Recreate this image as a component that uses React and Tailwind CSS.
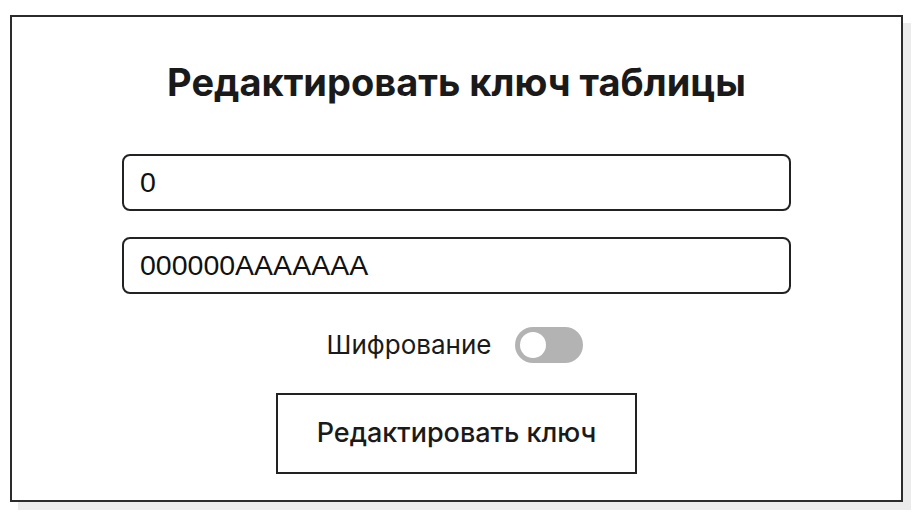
import { useState } from 'react';

export default function App() {
  const [encrypted, setEncrypted] = useState(false);

  return (
    <div className="min-h-screen bg-white pt-[15px] pl-[10px]" style={{ fontFamily: 'Inter, "Noto Sans", sans-serif' }}>
      {/* Карточка редактирования */}
      <div className="w-[893px] h-[487px] border-2 border-[#2b2b2b] bg-white shadow-[8px_8px_0_#ebebeb] flex flex-col items-center pt-[42px]">
        <h1 className="text-[38px] leading-[46px] font-bold text-[#1a1a1a]">Редактировать ключ таблицы</h1>

        <input
          type="text"
          defaultValue="0"
          className="mt-[49px] w-[669px] h-[57px] border-2 border-[#222] rounded-[8px] px-[16px] text-[28.5px] text-[#111] outline-none"
          style={{ fontFamily: '"Liberation Sans", Arial, sans-serif' }}
        />
        <input
          type="text"
          defaultValue="000000AAAAAAA"
          className="mt-[26px] w-[669px] h-[57px] border-2 border-[#222] rounded-[8px] px-[16px] text-[28.5px] text-[#111] outline-none"
          style={{ fontFamily: '"Liberation Sans", Arial, sans-serif' }}
        />

        {/* Переключатель шифрования */}
        <div className="mt-[31px] mr-[3px] flex items-center gap-[24px]">
          <span className="text-[26px] text-[#1a1a1a]">Шифрование</span>
          <button
            type="button"
            onClick={() => setEncrypted(!encrypted)}
            className={`w-[68px] h-[36px] rounded-full flex items-center px-[5px] ${encrypted ? 'bg-[#4a4a4a] justify-end' : 'bg-[#b3b3b3] justify-start'}`}
          >
            <span className="w-[26px] h-[26px] rounded-full bg-white" />
          </button>
        </div>

        <button
          type="button"
          className="mt-[29px] w-[361px] h-[81px] border-2 border-[#222] bg-white text-[27px] font-medium text-[#1a1a1a]"
        >
          Редактировать ключ
        </button>
      </div>
    </div>
  );
}
